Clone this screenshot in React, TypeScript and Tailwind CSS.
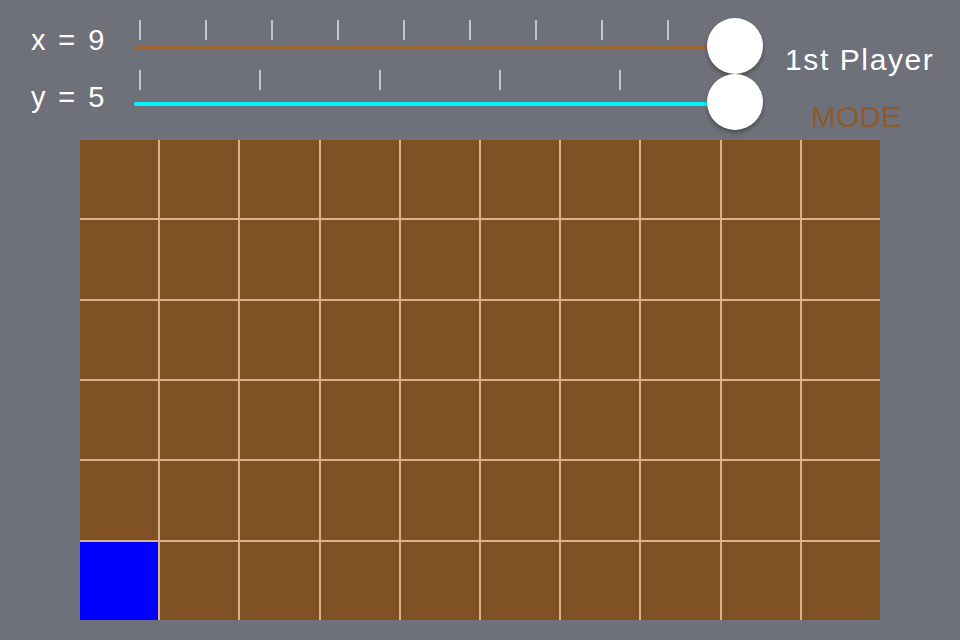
import { JSX } from "react";

const COLS = 10;
const ROWS = 6;

export default function App(): JSX.Element {
    const cells = Array.from({ length: COLS * ROWS }, (_, i) => i);
    const blueCell = (ROWS - 1) * COLS;

    return (
        <div className="w-[960px] h-[640px] bg-[#6e717a] flex flex-col font-['Liberation_Sans',Arial,sans-serif] text-white overflow-hidden">
            <div className="h-[140px] flex">
                <div className="w-[134px] pl-[31px] pt-[23px] flex flex-col text-[29px] leading-none tracking-[2.4px]">
                    <div className="h-[36px] pt-[3px]">x = 9</div>
                    <div className="h-[36px] mt-[24px]">y = 5</div>
                </div>
                <div className="w-[629px] pt-[18px] flex flex-col">
                    <Slider ticks={9} tickGap={66} track="bg-[#9c6536]" tickTop={2} />
                    <Slider ticks={5} tickGap={120} track="bg-[#00f4ff]" tickTop={-4} />
                </div>
                <div className="flex-1 flex flex-col items-start pt-[45px] pl-[22px]">
                    <div className="text-[30px] leading-none tracking-[1.6px]">1st Player</div>
                    <div className="mt-[27px] ml-[26px] text-[30px] leading-none text-[#8d5b2c]">MODE</div>
                </div>
            </div>
            <div className="ml-[80px] w-[800px] h-[480px] bg-[#d8b48e] grid grid-cols-10 grid-rows-6 gap-[2px]">
                {cells.map((i) => (
                    <div key={i} className={i === blueCell ? "bg-[#0000ff]" : "bg-[#7f5123]"} />
                ))}
            </div>
        </div>
    );
}

function Slider({ ticks, tickGap, track, tickTop }: { ticks: number; tickGap: number; track: string; tickTop: number }) {
    return (
        <div className="relative h-[56px]">
            {Array.from({ length: ticks }, (_, i) => (
                <div
                    key={i}
                    className="absolute w-[2px] h-[20px] bg-[#c3c5ca]"
                    style={{ left: 5 + i * tickGap, top: tickTop }}
                />
            ))}
            <div className={`absolute left-0 right-[40px] top-[28px] h-[4px] rounded-full ${track}`} />
            <div className="absolute right-0 top-0 w-[56px] h-[56px] rounded-full bg-white shadow-[0_3px_4px_rgba(0,0,0,0.3)]" />
        </div>
    );
}
